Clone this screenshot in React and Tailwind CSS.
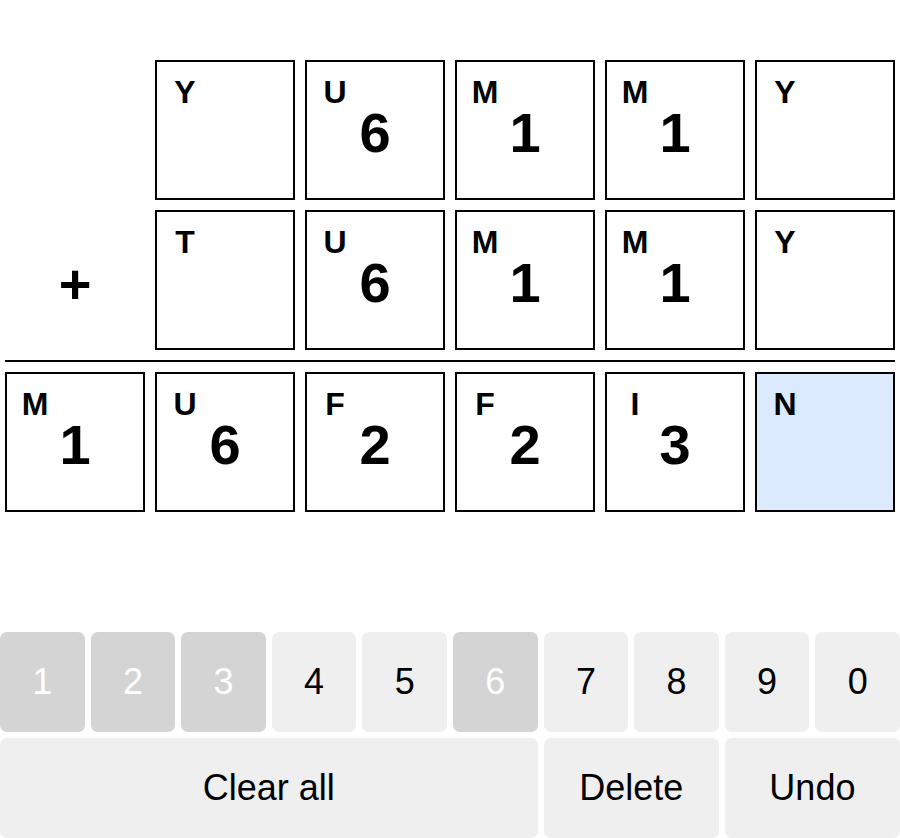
import { useState } from "react"

const rows = [
  { sign: "", cells: [null, ["Y", ""], ["U", "6"], ["M", "1"], ["M", "1"], ["Y", ""]] },
  { sign: "+", cells: [null, ["T", ""], ["U", "6"], ["M", "1"], ["M", "1"], ["Y", ""]] },
]

const result = [["M", "1"], ["U", "6"], ["F", "2"], ["F", "2"], ["I", "3"], ["N", ""]]

const usedDigits = ["1", "2", "3", "6"]

function Cell({ letter, digit, active }) {
  return (
    <div
      className={`relative h-[140px] border-2 border-black flex items-center justify-center ${
        active ? "bg-[#dbeafe]" : "bg-white"
      }`}
    >
      <span className="absolute top-[6px] left-[8px] w-[40px] text-center text-[32px] font-bold text-black">
        {letter}
      </span>
      <span className="mt-[5px] text-[56px] font-bold text-black">{digit}</span>
    </div>
  )
}

export default function App() {
  const [selected] = useState(5)

  return (
    <div className="w-[900px] h-[838px] bg-white overflow-hidden font-['Liberation_Sans',Arial,sans-serif]">
      {/* Puzzle */}
      <div className="px-[5px] pt-[60px]">
        <div className="flex flex-col gap-[10px]">
          {rows.map((row, r) => (
            <div key={r} className="grid grid-cols-6 gap-[10px]">
              {row.cells.map((cell, i) =>
                cell ? (
                  <Cell key={i} letter={cell[0]} digit={cell[1]} />
                ) : (
                  <div key={i} className="h-[140px] flex items-center justify-center">
                    <span className="mt-[8px] text-[56px] font-bold text-black">{row.sign}</span>
                  </div>
                )
              )}
            </div>
          ))}
          <div className="h-[2px] bg-black"></div>
          <div className="grid grid-cols-6 gap-[10px]">
            {result.map((cell, i) => (
              <Cell key={i} letter={cell[0]} digit={cell[1]} active={i === selected} />
            ))}
          </div>
        </div>
      </div>

      {/* Keypad */}
      <div className="mt-[120px] grid grid-cols-10 gap-[6px]">
        {["1", "2", "3", "4", "5", "6", "7", "8", "9", "0"].map((d) => {
          const used = usedDigits.includes(d)
          return (
            <button
              key={d}
              className={`h-[100px] rounded-[7px] text-[36px] ${
                used ? "bg-[#d4d4d4] text-white" : "bg-[#efefef] text-black"
              }`}
            >
              {d}
            </button>
          )
        })}
        <button className="col-span-6 h-[100px] rounded-[7px] bg-[#efefef] text-black text-[36px]">
          Clear all
        </button>
        <button className="col-span-2 h-[100px] rounded-[7px] bg-[#efefef] text-black text-[36px]">
          Delete
        </button>
        <button className="col-span-2 h-[100px] rounded-[7px] bg-[#efefef] text-black text-[36px]">
          Undo
        </button>
      </div>
    </div>
  )
}
